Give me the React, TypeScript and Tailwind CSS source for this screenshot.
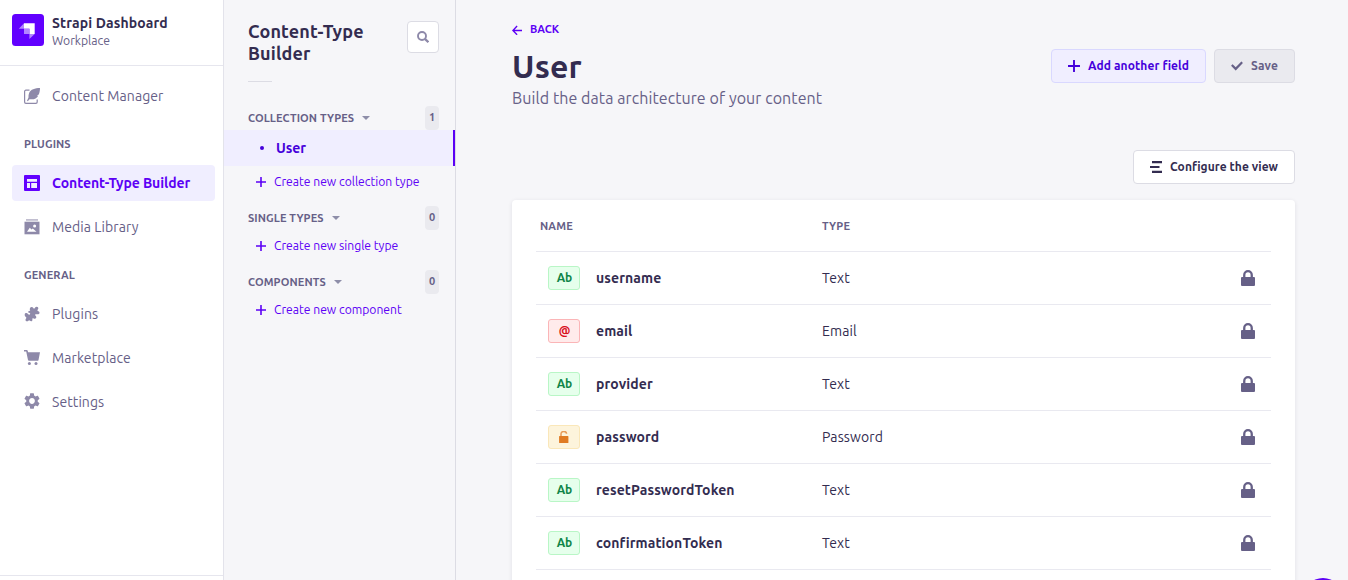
import { ReactNode } from "react";
import { MdSettings } from "react-icons/md";

const PlusIcon = ({ className = "" }: { className?: string }) => (
  <svg viewBox="0 0 24 24" fill="currentColor" className={`shrink-0 ${className}`}>
    <path d="M24 13.604a.3.3 0 01-.3.3h-9.795V23.7a.3.3 0 01-.3.3h-3.21a.3.3 0 01-.3-.3v-9.795H.3a.3.3 0 01-.3-.3v-3.21a.3.3 0 01.3-.3h9.795V.3a.3.3 0 01.3-.3h3.21a.3.3 0 01.3.3v9.795H23.7a.3.3 0 01.3.3v3.21z" />
  </svg>
);

const CheckIcon = () => (
  <svg viewBox="0 0 24 24" fill="currentColor" className="size-3 shrink-0">
    <path d="M20.727 2.97a.2.2 0 01.286 0l2.85 2.89a.2.2 0 010 .28L9.554 20.854a.2.2 0 01-.285 0l-9.13-9.243a.2.2 0 010-.281l2.85-2.892a.2.2 0 01.284 0l6.14 6.209L20.726 2.97z" />
  </svg>
);

const ArrowLeftIcon = () => (
  <svg viewBox="0 0 10 10" fill="none" stroke="currentColor" strokeWidth="1.35" className="size-2.5 shrink-0">
    <path d="M10 5.500H1M5.100 1L.9 5.500l4.200 4.300" />
  </svg>
);

const SearchIcon = () => (
  <svg viewBox="0 0 12 12" fill="none" stroke="currentColor" strokeWidth="1.900" className="size-3">
    <circle cx="5" cy="5" r="4" />
    <path d="M7.900 7.900l3.500 3.300" strokeWidth="2.300" />
  </svg>
);

const LayersIcon = () => (
  <svg viewBox="0 0 12 12" fill="currentColor" className="size-3 shrink-0">
    <path d="M2 0h10v2.200H2zM0 4.900h9.500v2.200H0zM2 9.800h10V12H2z" />
  </svg>
);

const LockIcon = () => (
  <svg viewBox="0 0 14 16" fill="currentColor" className="h-4 w-3.5">
    <path d="M2.100 7V4.900a4.900 4.900 0 019.800 0V7H13a1 1 0 011 1v7a1 1 0 01-1 1H1a1 1 0 01-1-1V8a1 1 0 011-1zm2.300 0h5.200V4.900a2.600 2.600 0 00-5.200 0z" />
  </svg>
);

const UnlockIcon = () => (
  <svg viewBox="0 0 10 12" className="h-3 w-2.5">
    <path d="M2 5V3.100a2.800 2.500 0 015.600-.3" fill="none" stroke="#e79b57" strokeWidth="1.500" />
    <path d="M.6 5h8.300a.5.5 0 01.5.5v6a.5.5 0 01-.5.5H.6a.5.5 0 01-.5-.5v-6A.5.5 0 01.6 5z" fill="#e07b22" />
  </svg>
);

const WriteIcon = () => (
  <svg viewBox="0 0 16 16" className="size-4">
    <path d="M5.500 2.200H1.900A1.300 1.300 0 00.6 3.500v10.600a1.300 1.300 0 001.300 1.300h10a1.300 1.300 0 001.300-1.300V11.500" fill="none" stroke="currentColor" strokeWidth="1.200" />
    <path d="M16 0C11 0 6.600 1.400 5.100 4.900c-.6 1.600-.7 3.100-.6 4.600L3 12.800l.8.500 1.700-2.100c4.200.5 7.400-.6 8.700-3.500l-1.300-.2 1.900-1C15.600 4.600 16 2.200 16 0z" fill="currentColor" />
  </svg>
);

const LayoutIcon = () => (
  <svg viewBox="0 0 16 16" className="size-4">
    <rect width="16" height="16" rx="1" fill="currentColor" />
    <path d="M3 4h10v2.800H3zM3 8h3v5H3zM7.200 8H13v5H7.200z" fill="#f0eeff" />
  </svg>
);

const MediaIcon = () => (
  <svg viewBox="0 0 16 16" className="size-4">
    <path d="M2 0h12v1.800H2z" fill="currentColor" opacity=".55" />
    <path d="M.5 2.700h15v12.600H.5z" fill="currentColor" />
    <path d="M3 12.800l2.800-4 1.700 1.800 1.300-1.200 3.700 3.400z" fill="#fff" />
    <circle cx="10.600" cy="6.900" r="1.500" fill="#fff" />
  </svg>
);

const PuzzleIcon = () => (
  <svg viewBox="0 0 16 16" fill="currentColor" className="size-4">
    <path d="M6.200 4.700C5.200 3 6 .9 7.700.9c1.600 0 1.500 1.900 2.600 1.700C11.200 2.400 11 .8 12.600.8c1.700 0 2.300 1.900 1.200 2.800-.8.700-.3 1.500.6 1.600 1.500.3 1.500 2.700 0 3-1.400.3-2.500-.5-3.200.3-.7.900 1.500 1.500 1.100 3.100-.4 1.500-2.100 1.300-2.700.8-.9-.6-1.500.2-1.200 1.100.4 1.500-1.400 2.400-2.400 1.300-.7-.8-1-.9-1.600-.1-.8 1.100-3 .7-2.900-1 .1-1.100 1.400-1.600.6-2.500C1.500 10.500.5 9.700.7 8.400c.2-1.600 2.400-1.800 3.300-.5.700.9 1.600 1 2.100.2.600-1.100-.9-1.300-1.700-1.600-.7-.3-.2-1.600 1.800-1.800z" />
  </svg>
);

const CartIcon = () => (
  <svg viewBox="0 0 16 16" fill="currentColor" className="size-4">
    <path d="M0 0h2.800c.5 0 .8.200.9.700l.4 1.600H16l-1.500 7.600c-.1.600-.5.900-1 .9H5c-.6 0-.9-.3-1-.8L2.200 1.400H0z" />
    <circle cx="5.400" cy="13.500" r="1.500" />
    <circle cx="12" cy="13.500" r="1.500" />
  </svg>
);

const CaretIcon = () => (
  <svg viewBox="0 0 8 4" className="h-1 w-2 text-[#8e8ea9]" fill="currentColor">
    <path d="M0 0h8L4 4z" />
  </svg>
);

const StrapiLogo = () => (
  <svg viewBox="0 0 32 32" className="size-8 shrink-0">
    <rect width="32" height="32" rx="3.500" fill="#6200ff" />
    <path d="M12 9.200h10.700v10.700h-5.300v-5.100H12z" fill="#fff" />
    <path d="M12 9.200v5.600H6.800zM12 14.800h5.400v5.100H12zM17.400 19.900h5.300l-5.300 5.200z" fill="#b385ff" />
  </svg>
);

type NavItemProps = { icon: ReactNode; label: string; active?: boolean };

const NavItem = ({ icon, label, active }: NavItemProps) => (
  <a
    className={`mx-2 ml-3 flex h-9 items-center gap-3 rounded px-3 text-sm whitespace-nowrap ${
      active
        ? "bg-[#f0eeff] font-semibold tracking-[-0.08px] text-[#5c00f5]"
        : "tracking-[0.08px] text-[#666087]"
    }`}
  >
    <span className={active ? "text-[#6200ff]" : "text-[#8e89a9]"}>{icon}</span>
    {label}
  </a>
);

const NavHeading = ({ children }: { children: ReactNode }) => (
  <h2 className="h-4 px-6 text-[11px] leading-4 font-bold tracking-[0.1px] text-[#666087]">{children}</h2>
);

const Sidebar = () => (
  <nav className="flex w-56 shrink-0 flex-col border-r border-[#e3e3eb] bg-white">
    <div className="flex h-[66px] gap-2 border-b border-[#e6e6ee] pt-3.5 pl-3">
      <StrapiLogo />
      <div className="-mt-0.5 whitespace-nowrap">
        <div className="text-sm leading-[22px] font-bold tracking-[0.12px] text-[#332c50]">Strapi Dashboard</div>
        <div className="text-[12.2px] leading-[13px] text-[#666087]">Workplace</div>
      </div>
    </div>
    <div className="flex grow flex-col pt-3">
      <NavItem icon={<WriteIcon />} label="Content Manager" />
      <div className="mt-[22px]"><NavHeading>PLUGINS</NavHeading></div>
      <div className="mt-[13px] flex flex-col gap-2">
        <NavItem icon={<LayoutIcon />} label="Content-Type Builder" active />
        <NavItem icon={<MediaIcon />} label="Media Library" />
      </div>
      <div className="mt-[22px]"><NavHeading>GENERAL</NavHeading></div>
      <div className="mt-[13px] flex flex-col gap-2">
        <NavItem icon={<PuzzleIcon />} label="Plugins" />
        <NavItem icon={<CartIcon />} label="Marketplace" />
        <NavItem icon={<MdSettings className="-mt-0.5 size-4 scale-120" />} label="Settings" />
      </div>
    </div>
    <div className="h-[5px] border-t border-[#e6e6ee]" />
  </nav>
);

const GroupHeading = ({ label, count }: { label: string; count: number }) => (
  <div className="flex h-6 items-center justify-between pr-4 pl-6">
    <span className="flex items-center gap-2 text-[11px] leading-4 font-bold tracking-[0.11px] whitespace-nowrap text-[#666087]">
      {label}
      <CaretIcon />
    </span>
    <span className="flex h-6 w-3.5 items-center justify-center rounded bg-[#eaeaef] pb-0.5 text-[11px] font-bold text-[#666087]">
      {count}
    </span>
  </div>
);

const CreateLink = ({ label }: { label: string }) => (
  <a className="flex h-4 items-center gap-2 pl-8 text-[12.15px] leading-4 whitespace-nowrap text-[#5c00f5]">
    <PlusIcon className="size-2.5" />
    {label}
  </a>
);

const SubNav = () => (
  <aside className="flex w-[232px] shrink-0 flex-col border-r border-[#dcdce4] bg-[#f6f6f9]">
    <div className="flex items-start justify-between pt-[21px] pr-4 pl-6">
      <h2 className="-mt-px mb-px text-lg leading-[22px] font-bold tracking-[0.14px] text-[#332c50]">
        Content-Type
        <br />
        Builder
      </h2>
      <button className="flex size-8 items-center justify-center rounded border border-[#dcdce4] bg-white text-[#8e89a9]">
        <SearchIcon />
      </button>
    </div>
    <div className="mt-4 ml-6 h-px w-6 bg-[#dcdce4]" />
    <div className="mt-6">
      <GroupHeading label="COLLECTION TYPES" count={1} />
      <div className="flex h-9 items-center border-r-2 border-[#5c00f5] bg-[#f0eeff] pl-9 text-sm font-semibold tracking-[-0.05px] text-[#4500db]">
        <span className="mr-3 size-1 rounded-full bg-[#4500db]" />
        User
      </div>
      <div className="mt-2"><CreateLink label="Create new collection type" /></div>
      <div className="mt-4"><GroupHeading label="SINGLE TYPES" count={0} /></div>
      <div className="mt-2"><CreateLink label="Create new single type" /></div>
      <div className="mt-4"><GroupHeading label="COMPONENTS" count={0} /></div>
      <div className="mt-2"><CreateLink label="Create new component" /></div>
    </div>
  </aside>
);

type FieldKind = "Text" | "Email" | "Password";

const fields: { name: string; type: FieldKind }[] = [
  { name: "username", type: "Text" },
  { name: "email", type: "Email" },
  { name: "provider", type: "Text" },
  { name: "password", type: "Password" },
  { name: "resetPasswordToken", type: "Text" },
  { name: "confirmationToken", type: "Text" },
];

const badgeStyles: Record<FieldKind, string> = {
  Text: "border-[#b9f6c6] bg-[#e6ffec] pl-px text-[#108548]",
  Email: "border-[#fbb5b7] bg-[#ffebeb] pl-px text-[#d9101c]",
  Password: "border-[#fae7b9] bg-[#fdf4dc] pr-px text-[#e07b22]",
};

const FieldBadge = ({ type }: { type: FieldKind }) => (
  <span className={`flex h-6 w-8 items-center justify-center rounded-[3px] border text-xs font-bold ${badgeStyles[type]}`}>
    {type === "Text" ? "Ab" : type === "Email" ? "@" : <UnlockIcon />}
  </span>
);

const FieldTable = () => (
  <section className="h-[500px] rounded bg-white px-6 shadow-[0_1px_4px_rgba(33,33,52,0.1)]">
    <div className="flex h-[51px] items-center pt-0.5 pl-1 text-[11px] font-bold tracking-[0.15px] text-[#666087]">
      <span className="w-[282px]">NAME</span>
      <span>TYPE</span>
    </div>
    {fields.map((field) => (
      <div key={field.name} className="flex h-[53px] items-center border-t border-[#e9e9f0] pr-4 pl-3 text-sm text-[#332c50]">
        <FieldBadge type={field.type} />
        <span className="ml-4 w-[226px] font-bold tracking-[0.11px]">{field.name}</span>
        <span className="tracking-[0.1px]">{field.type}</span>
        <span className="ml-auto text-[#666087]"><LockIcon /></span>
      </div>
    ))}
    <div className="border-t border-[#e9e9f0]" />
  </section>
);

const buttonBase = "flex h-[34px] items-center rounded border px-4 text-xs font-bold whitespace-nowrap";

const Main = () => (
  <main className="relative grow bg-[#f6f6f9] pr-[53px] pl-14">
    <a className="mt-[21px] flex h-4 items-center gap-2 pt-px text-[11px] font-bold text-[#5c00f5]">
      <ArrowLeftIcon />
      BACK
    </a>
    <div className="mt-3 flex h-[34px] items-center justify-between">
      <h1 className="text-[32px] leading-[34px] font-bold tracking-[0.2px] text-[#332c50]">User</h1>
      <div className="flex gap-2">
        <button className={`${buttonBase} w-[155px] gap-2 border-[#d9d8ff] bg-[#f0eeff] tracking-[0.1px] text-[#4500db]`}>
          <PlusIcon className="size-3" />
          Add another field
        </button>
        <button className={`${buttonBase} w-[81px] gap-2 border-[#dcdce4] bg-[#eaeaef] tracking-[0.1px] text-[#666087]`}>
          <CheckIcon />
          Save
        </button>
      </div>
    </div>
    <p className="mt-[3px] text-base leading-6 tracking-[0.08px] text-[#666087]">Build the data architecture of your content</p>
    <div className="mt-10 mb-4 flex justify-end">
      <button className={`${buttonBase} w-[162px] gap-2 border-[#dcdce4] bg-white tracking-[0.06px] text-[#332c50]`}>
        <LayersIcon />
        Configure the view
      </button>
    </div>
    <FieldTable />
    <div className="absolute top-[578px] left-[847px] size-10 rounded-full bg-[#5c00f5]" />
  </main>
);

export default function App() {
  return (
    <div className="flex h-[580px] w-[1348px] overflow-hidden font-['Ubuntu','Noto_Sans',sans-serif]">
      <Sidebar />
      <SubNav />
      <Main />
    </div>
  );
}
